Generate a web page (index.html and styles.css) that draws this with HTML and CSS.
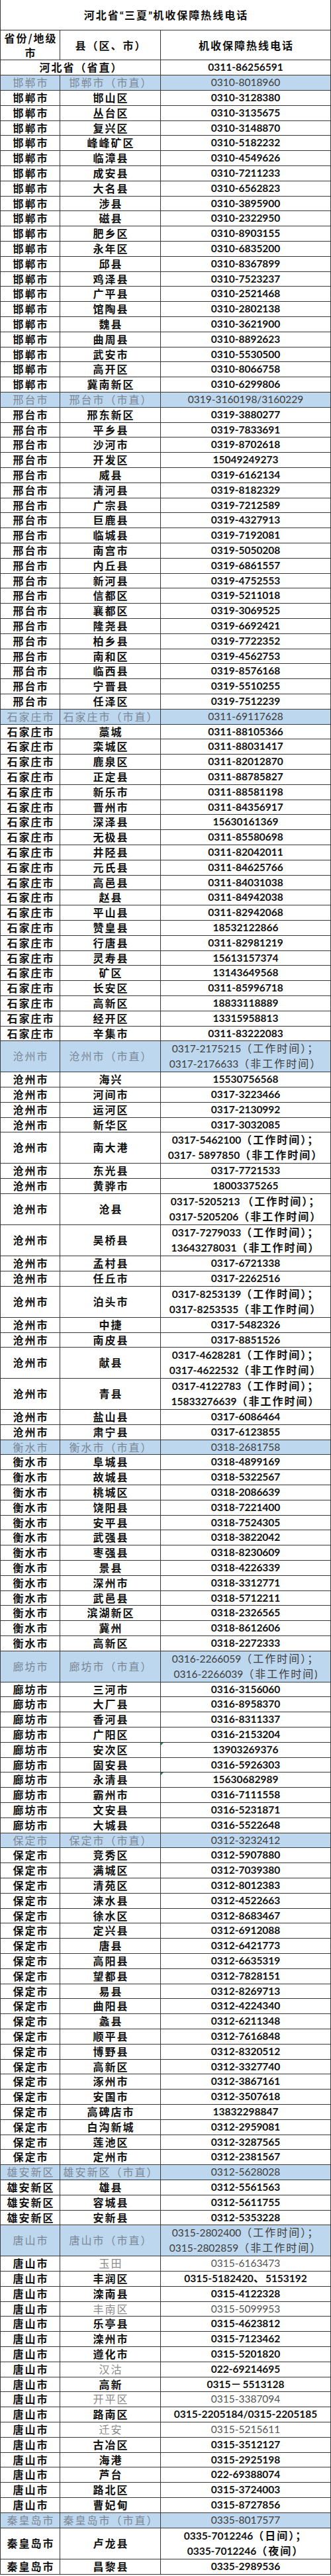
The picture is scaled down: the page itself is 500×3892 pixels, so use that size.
FILE: index.html
```html
<!DOCTYPE html>
<html lang="zh-CN">
<head>
<meta charset="utf-8">
<title>河北省“三夏”机收保障热线电话</title>
<link rel="stylesheet" href="styles.css">
</head>
<body>
<table class="hotline">
<colgroup><col class="c1"><col class="c2"><col class="c3"></colgroup>
<thead>
<tr class="title"><th colspan="3">河北省<span class="q">“</span>三夏<span class="q">”</span>机收保障热线电话</th></tr>
<tr class="head"><th>省份/地级<br>市</th><th>县（区、市）</th><th>机收保障热线电话</th></tr>
</thead>
<tbody>
<tr><td colspan="2">河北省（省直）</td><td class="num">0311-86256591</td></tr>

<tr class="zhi"><td>邯郸市</td><td>邯郸市（市直）</td><td class="num">0310-8018960</td></tr>
<tr><td>邯郸市</td><td>邯山区</td><td class="num">0310-3128380</td></tr>
<tr><td>邯郸市</td><td>丛台区</td><td class="num">0310-3135675</td></tr>
<tr><td>邯郸市</td><td>复兴区</td><td class="num">0310-3148870</td></tr>
<tr><td>邯郸市</td><td>峰峰矿区</td><td class="num">0310-5182232</td></tr>
<tr><td>邯郸市</td><td>临漳县</td><td class="num">0310-4549626</td></tr>
<tr><td>邯郸市</td><td>成安县</td><td class="num">0310-7211233</td></tr>
<tr><td>邯郸市</td><td>大名县</td><td class="num">0310-6562823</td></tr>
<tr><td>邯郸市</td><td>涉县</td><td class="num">0310-3895900</td></tr>
<tr><td>邯郸市</td><td>磁县</td><td class="num">0310-2322950</td></tr>
<tr><td>邯郸市</td><td>肥乡区</td><td class="num">0310-8903155</td></tr>
<tr><td>邯郸市</td><td>永年区</td><td class="num">0310-6835200</td></tr>
<tr><td>邯郸市</td><td>邱县</td><td class="num">0310-8367899</td></tr>
<tr><td>邯郸市</td><td>鸡泽县</td><td class="num">0310-7523237</td></tr>
<tr><td>邯郸市</td><td>广平县</td><td class="num">0310-2521468</td></tr>
<tr><td>邯郸市</td><td>馆陶县</td><td class="num">0310-2802138</td></tr>
<tr><td>邯郸市</td><td>魏县</td><td class="num">0310-3621900</td></tr>
<tr><td>邯郸市</td><td>曲周县</td><td class="num">0310-8892623</td></tr>
<tr><td>邯郸市</td><td>武安市</td><td class="num">0310-5530500</td></tr>
<tr><td>邯郸市</td><td>高开区</td><td class="num">0310-8066758</td></tr>
<tr><td>邯郸市</td><td>冀南新区</td><td class="num">0310-6299806</td></tr>

<tr class="zhi"><td>邢台市</td><td>邢台市（市直）</td><td class="num">0319-3160198/3160229</td></tr>
<tr><td>邢台市</td><td>邢东新区</td><td class="num">0319-3880277</td></tr>
<tr><td>邢台市</td><td>平乡县</td><td class="num">0319-7833691</td></tr>
<tr><td>邢台市</td><td>沙河市</td><td class="num">0319-8702618</td></tr>
<tr><td>邢台市</td><td>开发区</td><td class="num">15049249273</td></tr>
<tr><td>邢台市</td><td>威县</td><td class="num">0319-6162134</td></tr>
<tr><td>邢台市</td><td>清河县</td><td class="num">0319-8182329</td></tr>
<tr><td>邢台市</td><td>广宗县</td><td class="num">0319-7212589</td></tr>
<tr><td>邢台市</td><td>巨鹿县</td><td class="num">0319-4327913</td></tr>
<tr><td>邢台市</td><td>临城县</td><td class="num">0319-7192081</td></tr>
<tr><td>邢台市</td><td>南宫市</td><td class="num">0319-5050208</td></tr>
<tr><td>邢台市</td><td>内丘县</td><td class="num">0319-6861557</td></tr>
<tr><td>邢台市</td><td>新河县</td><td class="num">0319-4752553</td></tr>
<tr><td>邢台市</td><td>信都区</td><td class="num">0319-5211018</td></tr>
<tr><td>邢台市</td><td>襄都区</td><td class="num">0319-3069525</td></tr>
<tr><td>邢台市</td><td>隆尧县</td><td class="num">0319-6692421</td></tr>
<tr><td>邢台市</td><td>柏乡县</td><td class="num">0319-7722352</td></tr>
<tr><td>邢台市</td><td>南和区</td><td class="num">0319-4562753</td></tr>
<tr><td>邢台市</td><td>临西县</td><td class="num">0319-8576168</td></tr>
<tr><td>邢台市</td><td>宁晋县</td><td class="num">0319-5510255</td></tr>
<tr><td>邢台市</td><td>任泽区</td><td class="num">0319-7512239</td></tr>

<tr class="zhi"><td>石家庄市</td><td>石家庄市（市直）</td><td class="num">0311-69117628</td></tr>
<tr><td>石家庄市</td><td>藁城</td><td class="num">0311-88105366</td></tr>
<tr><td>石家庄市</td><td>栾城区</td><td class="num">0311-88031417</td></tr>
<tr><td>石家庄市</td><td>鹿泉区</td><td class="num">0311-82012870</td></tr>
<tr><td>石家庄市</td><td>正定县</td><td class="num">0311-88785827</td></tr>
<tr><td>石家庄市</td><td>新乐市</td><td class="num">0311-88581198</td></tr>
<tr><td>石家庄市</td><td>晋州市</td><td class="num">0311-84356917</td></tr>
<tr><td>石家庄市</td><td>深泽县</td><td class="num">15630161369</td></tr>
<tr><td>石家庄市</td><td>无极县</td><td class="num">0311-85580698</td></tr>
<tr><td>石家庄市</td><td>井陉县</td><td class="num">0311-82042011</td></tr>
<tr><td>石家庄市</td><td>元氏县</td><td class="num">0311-84625766</td></tr>
<tr><td>石家庄市</td><td>高邑县</td><td class="num">0311-84031038</td></tr>
<tr><td>石家庄市</td><td>赵县</td><td class="num">0311-84942038</td></tr>
<tr><td>石家庄市</td><td>平山县</td><td class="num">0311-82942068</td></tr>
<tr><td>石家庄市</td><td>赞皇县</td><td class="num">18532122866</td></tr>
<tr><td>石家庄市</td><td>行唐县</td><td class="num">0311-82981219</td></tr>
<tr><td>石家庄市</td><td>灵寿县</td><td class="num">15613157374</td></tr>
<tr><td>石家庄市</td><td>矿区</td><td class="num">13143649568</td></tr>
<tr><td>石家庄市</td><td>长安区</td><td class="num">0311-85996718</td></tr>
<tr><td>石家庄市</td><td>高新区</td><td class="num">18833118889</td></tr>
<tr><td>石家庄市</td><td>经开区</td><td class="num">13315958813</td></tr>
<tr><td>石家庄市</td><td>辛集市</td><td class="num">0311-83222083</td></tr>

<tr class="zhi dbl"><td>沧州市</td><td>沧州市（市直）</td><td class="num">0317-2175215<span class="note">（工作时间）；</span><br>0317-2176633<span class="note">（非工作时间）</span></td></tr>
<tr><td>沧州市</td><td>海兴</td><td class="num">15530756568</td></tr>
<tr><td>沧州市</td><td>河间市</td><td class="num">0317-3223466</td></tr>
<tr><td>沧州市</td><td>运河区</td><td class="num">0317-2130992</td></tr>
<tr><td>沧州市</td><td>新华区</td><td class="num">0317-3032085</td></tr>
<tr class="dbl"><td>沧州市</td><td>南大港</td><td class="num">0317-5462100<span class="note">（工作时间）；</span><br>0317- 5897850<span class="note">（非工作时间）</span></td></tr>
<tr><td>沧州市</td><td>东光县</td><td class="num">0317-7721533</td></tr>
<tr><td>沧州市</td><td>黄骅市</td><td class="num">18003375265</td></tr>
<tr class="dbl"><td>沧州市</td><td>沧县</td><td class="num">0317-5205213 <span class="note">（工作时间）；</span><br>0317-5205206<span class="note">（非工作时间）</span></td></tr>
<tr class="dbl"><td>沧州市</td><td>吴桥县</td><td class="num">0317-7279033<span class="note">（工作时间）；</span><br>13643278031<span class="note">（非工作时间）</span></td></tr>
<tr><td>沧州市</td><td>孟村县</td><td class="num">0317-6721338</td></tr>
<tr><td>沧州市</td><td>任丘市</td><td class="num">0317-2262516</td></tr>
<tr class="dbl"><td>沧州市</td><td>泊头市</td><td class="num">0317-8253139<span class="note">（工作时间）；</span><br>0317-8253535<span class="note">（非工作时间）</span></td></tr>
<tr><td>沧州市</td><td>中捷</td><td class="num">0317-5482326</td></tr>
<tr><td>沧州市</td><td>南皮县</td><td class="num">0317-8851526</td></tr>
<tr class="dbl"><td>沧州市</td><td>献县</td><td class="num">0317-4628281<span class="note">（工作时间）；</span><br>0317-4622532<span class="note">（非工作时间）</span></td></tr>
<tr class="dbl"><td>沧州市</td><td>青县</td><td class="num">0317-4122783<span class="note">（工作时间）；</span><br>15833276639<span class="note">（非工作时间）</span></td></tr>
<tr><td>沧州市</td><td>盐山县</td><td class="num">0317-6086464</td></tr>
<tr><td>沧州市</td><td>肃宁县</td><td class="num">0317-6123855</td></tr>

<tr class="zhi"><td>衡水市</td><td>衡水市（市直）</td><td class="num">0318-2681758</td></tr>
<tr><td>衡水市</td><td>阜城县</td><td class="num">0318-4899169</td></tr>
<tr><td>衡水市</td><td>故城县</td><td class="num">0318-5322567</td></tr>
<tr><td>衡水市</td><td>桃城区</td><td class="num">0318-2086639</td></tr>
<tr><td>衡水市</td><td>饶阳县</td><td class="num">0318-7221400</td></tr>
<tr><td>衡水市</td><td>安平县</td><td class="num">0318-7524305</td></tr>
<tr><td>衡水市</td><td>武强县</td><td class="num">0318-3822042</td></tr>
<tr><td>衡水市</td><td>枣强县</td><td class="num">0318-8230609</td></tr>
<tr><td>衡水市</td><td>景县</td><td class="num">0318-4226339</td></tr>
<tr><td>衡水市</td><td>深州市</td><td class="num">0318-3312771</td></tr>
<tr><td>衡水市</td><td>武邑县</td><td class="num">0318-5712211</td></tr>
<tr><td>衡水市</td><td>滨湖新区</td><td class="num">0318-2326565</td></tr>
<tr><td>衡水市</td><td>冀州</td><td class="num">0318-8612606</td></tr>
<tr><td>衡水市</td><td>高新区</td><td class="num">0318-2272333</td></tr>

<tr class="zhi dbl"><td>廊坊市</td><td>廊坊市（市直）</td><td class="num">0316-2266059<span class="note">（工作时间）；</span><br>0316-2266039<span class="note">（非工作时间</span>)</td></tr>
<tr><td>廊坊市</td><td>三河市</td><td class="num">0316-3156060</td></tr>
<tr><td>廊坊市</td><td>大厂县</td><td class="num">0316-8958370</td></tr>
<tr><td>廊坊市</td><td>香河县</td><td class="num">0316-8311337</td></tr>
<tr><td>廊坊市</td><td>广阳区</td><td class="num">0316-2153204</td></tr>
<tr><td>廊坊市</td><td>安次区</td><td class="num flag">13903269376</td></tr>
<tr><td>廊坊市</td><td>固安县</td><td class="num">0316-5926303</td></tr>
<tr><td>廊坊市</td><td>永清县</td><td class="num flag">15630682989</td></tr>
<tr><td>廊坊市</td><td>霸州市</td><td class="num">0316-7111558</td></tr>
<tr><td>廊坊市</td><td>文安县</td><td class="num">0316-5231871</td></tr>
<tr><td>廊坊市</td><td>大城县</td><td class="num">0316-5522648</td></tr>

<tr class="zhi"><td>保定市</td><td>保定市（市直）</td><td class="num">0312-3232412</td></tr>
<tr><td>保定市</td><td>竞秀区</td><td class="num">0312-5907880</td></tr>
<tr><td>保定市</td><td>满城区</td><td class="num">0312-7039380</td></tr>
<tr><td>保定市</td><td>清苑区</td><td class="num">0312-8012383</td></tr>
<tr><td>保定市</td><td>涞水县</td><td class="num">0312-4522663</td></tr>
<tr><td>保定市</td><td>徐水区</td><td class="num">0312-8683467</td></tr>
<tr><td>保定市</td><td>定兴县</td><td class="num">0312-6912088</td></tr>
<tr><td>保定市</td><td>唐县</td><td class="num">0312-6421773</td></tr>
<tr><td>保定市</td><td>高阳县</td><td class="num">0312-6635319</td></tr>
<tr><td>保定市</td><td>望都县</td><td class="num">0312-7828151</td></tr>
<tr><td>保定市</td><td>易县</td><td class="num">0312-8269713</td></tr>
<tr><td>保定市</td><td>曲阳县</td><td class="num">0312-4224340</td></tr>
<tr><td>保定市</td><td>蠡县</td><td class="num">0312-6211348</td></tr>
<tr><td>保定市</td><td>顺平县</td><td class="num">0312-7616848</td></tr>
<tr><td>保定市</td><td>博野县</td><td class="num">0312-8320512</td></tr>
<tr><td>保定市</td><td>高新区</td><td class="num">0312-3327740</td></tr>
<tr><td>保定市</td><td>涿州市</td><td class="num">0312-3867161</td></tr>
<tr><td>保定市</td><td>安国市</td><td class="num">0312-3507618</td></tr>
<tr><td>保定市</td><td>高碑店市</td><td class="num">13832298847</td></tr>
<tr><td>保定市</td><td>白沟新城</td><td class="num">0312-2959081</td></tr>
<tr><td>保定市</td><td>莲池区</td><td class="num">0312-3287565</td></tr>
<tr><td>保定市</td><td>定州市</td><td class="num">0312-2381567</td></tr>

<tr class="zhi"><td>雄安新区</td><td>雄安新区（市直）</td><td class="num">0312-5628028</td></tr>
<tr><td>雄安新区</td><td>雄县</td><td class="num">0312-5561563</td></tr>
<tr><td>雄安新区</td><td>容城县</td><td class="num">0312-5611755</td></tr>
<tr><td>雄安新区</td><td>安新县</td><td class="num">0312-5353228</td></tr>

<tr class="zhi dbl"><td>唐山市</td><td>唐山市（市直）</td><td class="num">0315-2802400<span class="note">（工作时间）；</span><br>0315-2802859<span class="note">（非工作时间）</span></td></tr>
<tr class="muted"><td>唐山市</td><td>玉田</td><td class="num">0315-6163473</td></tr>
<tr><td>唐山市</td><td>丰润区</td><td class="num">0315-5182420<span class="note">、</span>5153192</td></tr>
<tr><td>唐山市</td><td>滦南县</td><td class="num">0315-4122328</td></tr>
<tr class="muted"><td>唐山市</td><td>丰南区</td><td class="num">0315-5099953</td></tr>
<tr><td>唐山市</td><td>乐亭县</td><td class="num">0315-4623812</td></tr>
<tr><td>唐山市</td><td>滦州市</td><td class="num">0315-7123462</td></tr>
<tr><td>唐山市</td><td>遵化市</td><td class="num">0315-5201820</td></tr>
<tr><td>唐山市</td><td class="soft">汉沽</td><td class="num">022-69214695</td></tr>
<tr><td>唐山市</td><td>高新</td><td class="num">0315<span class="note">－</span>5513128</td></tr>
<tr class="muted"><td>唐山市</td><td>开平区</td><td class="num">0315-3387094</td></tr>
<tr><td>唐山市</td><td>路南区</td><td class="num">0315-2205184/0315-2205185</td></tr>
<tr class="muted"><td>唐山市</td><td>迁安</td><td class="num">0315-5215611</td></tr>
<tr><td>唐山市</td><td>古冶区</td><td class="num">0315-3512127</td></tr>
<tr><td>唐山市</td><td>海港</td><td class="num">0315-2925198</td></tr>
<tr><td>唐山市</td><td>芦台</td><td class="num">022-69388074</td></tr>
<tr><td>唐山市</td><td>路北区</td><td class="num">0315-3724003</td></tr>
<tr><td>唐山市</td><td>曹妃甸</td><td class="num">0315-8727856</td></tr>

<tr class="zhi"><td>秦皇岛市</td><td>秦皇岛市（市直）</td><td class="num">0335-8017577</td></tr>
<tr class="dbl"><td>秦皇岛市</td><td>卢龙县</td><td class="num">0335-7012246<span class="note">（日间）；</span><br>0335-7012246<span class="note">（夜间）</span></td></tr>
<tr><td>秦皇岛市</td><td>昌黎县</td><td class="num">0335-2989536</td></tr>
</tbody>
</table>
</body>
</html>
```

FILE: styles.css
```css
* {
  box-sizing: border-box;
}

body {
  margin: 0;
  background: #ffffff;
}

.hotline {
  border-collapse: collapse;
  table-layout: fixed;
  width: 499px;
  font-family: "Noto Sans CJK SC", "Noto Sans", sans-serif;
  font-weight: 700;
  color: #111111;
}

.hotline .c1 {
  width: 90px;
}

.hotline .c2 {
  width: 152px;
}

.hotline .c3 {
  width: 257px;
}

.hotline th,
.hotline td {
  border: 1px solid #3a3a3a;
  padding: 0 0 0 2px;
  text-align: center;
  vertical-align: middle;
  font-size: 16px;
  letter-spacing: 2px;
  line-height: 21px;
  white-space: nowrap;
  font-weight: 700;
}

.hotline .title {
  height: 45px;
}

.hotline .title th {
  border-top: none;
}

.hotline .title .q {
  font-family: "Lato", sans-serif;
  letter-spacing: 1px;
  line-height: 16px;
}

.hotline .head {
  height: 45px;
}

.hotline .head th {
  line-height: 22px;
}

/* integer row heights that average out to the reference pitch */
.hotline tbody tr {
  height: 23px;
}

.hotline tbody tr:nth-child(5n) {
  height: 22px;
}

.hotline tbody tr.dbl {
  height: 47px;
}

.hotline .dbl td {
  line-height: 23px;
}

.hotline .num {
  font-family: "Lato", "Noto Sans CJK SC", sans-serif;
  font-size: 15.5px;
  letter-spacing: 0;
  padding: 0;
}

.hotline .note {
  font-family: "Noto Sans CJK SC", sans-serif;
  font-size: 16px;
  letter-spacing: 2px;
  line-height: 16px;
}

.hotline .zhi td {
  background: #bdd7ee;
  color: #7b8795;
  font-weight: 400;
}

.hotline .zhi td.num {
  color: #3d3d3d;
}

.hotline .muted td + td {
  color: #8a8a8a;
  font-weight: 400;
}

.hotline .muted td.num {
  color: #555555;
}

.hotline td.soft {
  color: #8a8a8a;
  font-weight: 400;
}

.hotline td.flag {
  position: relative;
}

.hotline td.flag::before {
  content: "";
  position: absolute;
  left: 0;
  top: 0;
  border-top: 4px solid #1f8a3b;
  border-right: 4px solid transparent;
}
```
